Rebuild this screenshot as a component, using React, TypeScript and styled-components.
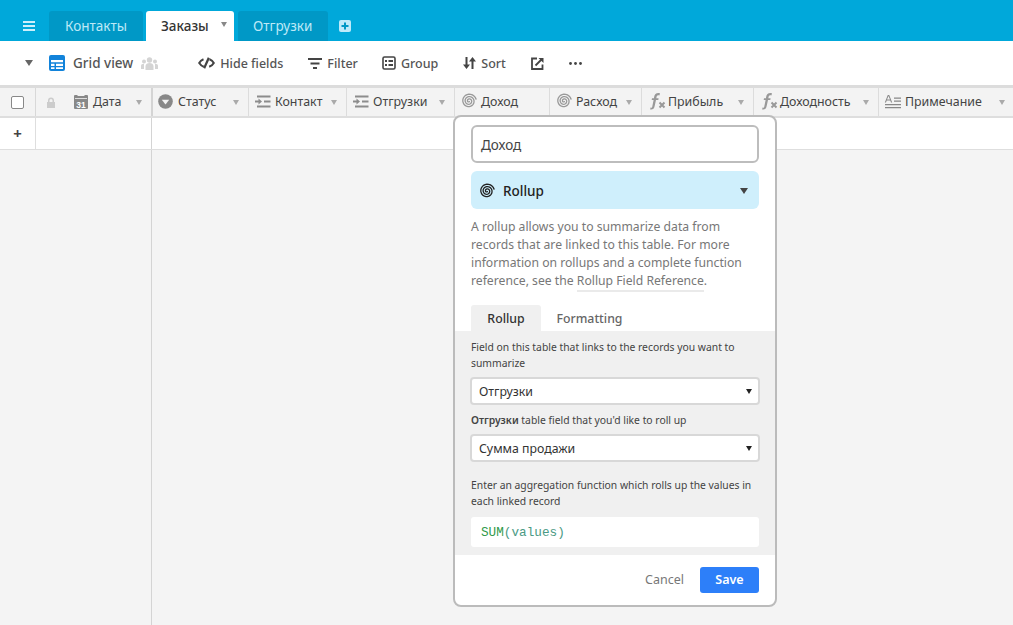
import { createGlobalStyle } from 'styled-components'
import styled from 'styled-components'

const GlobalStyle = createGlobalStyle`
  html, body {
    margin: 0;
    padding: 0;
    height: 100%;
    overflow: hidden;
    background: #f4f4f4;
    font-family: "Noto Sans", "Open Sans", sans-serif;
    color: #333;
  }
  * { box-sizing: border-box; }
`

const Page = styled.div`
  position: relative;
  width: 1013px;
  height: 625px;
  overflow: hidden;
  display: flex;
  flex-direction: column;
`

const TopBar = styled.div`
  height: 41px;
  background: #00a8da;
  display: flex;
  align-items: flex-end;
  padding-left: 23px;
`

const Burger = styled.div`
  width: 12px;
  height: 10px;
  margin: 0 14px 10px 0;
  color: #cdeffb;
  display: flex;
`

const Tab = styled.div<{ $active?: boolean; $w: number; $pad: number }>`
  width: ${(p) => p.$w}px;
  height: 30px;
  margin-right: ${(p) => (p.$active ? 4 : 3)}px;
  border-radius: 3px 3px 0 0;
  background: ${(p) => (p.$active ? '#fff' : '#0098c6')};
  color: ${(p) => (p.$active ? '#333' : '#bde9f7')};
  font-size: 13.5px;
  font-weight: ${(p) => (p.$active ? 500 : 400)};
  display: flex;
  align-items: center;
  padding-left: ${(p) => p.$pad}px;
  position: relative;
`

const TabCaret = styled.span`
  position: absolute;
  right: 7px;
  top: 11px;
  width: 0;
  height: 0;
  border-left: 3.5px solid transparent;
  border-right: 3.5px solid transparent;
  border-top: 5px solid #888;
`

const AddTab = styled.div`
  width: 12px;
  height: 12px;
  margin: 0 0 9px 8px;
  display: flex;
`

const Toolbar = styled.div`
  height: 44px;
  background: #fff;
  display: flex;
  align-items: center;
  color: #555;
  font-size: 12.5px;
  font-weight: 500;
`

const ViewCaret = styled.span`
  width: 0;
  height: 0;
  margin: 0 16px 0 25px;
  border-left: 4.5px solid transparent;
  border-right: 4.5px solid transparent;
  border-top: 6px solid #666;
`

const ViewName = styled.span`
  margin: 0 8px 0 8px;
  font-size: 13.5px;
  color: #555;
`

const ToolButton = styled.div<{ $left: number }>`
  display: flex;
  align-items: center;
  gap: 5px;
  margin-left: ${(p) => p.$left}px;
  white-space: nowrap;
`

const HeaderRow = styled.div`
  height: 33px;
  display: flex;
  background: #f3f3f3;
  border-top: 3px solid #dcdcdc;
  border-bottom: 2px solid #dedede;
`

const CheckCell = styled.div`
  width: 36px;
  flex: none;
  display: flex;
  align-items: center;
  justify-content: center;
  border-right: 1px solid #d8d8d8;
`

const CheckBox = styled.div`
  width: 13px;
  height: 13px;
  border: 1px solid #888;
  border-radius: 2px;
  background: #fff;
`

const LockCell = styled.div`
  width: 32px;
  flex: none;
  display: flex;
  align-items: center;
  padding-left: 10px;
`

const HeaderCell = styled.div<{ $w: number; $strong?: boolean; $gap: number; $pad: number }>`
  width: ${(p) => p.$w}px;
  flex: none;
  display: flex;
  align-items: center;
  position: relative;
  padding: 0 0 2px ${(p) => p.$pad}px;
  gap: ${(p) => p.$gap}px;
  font-size: 12.4px;
  color: #444;
  white-space: nowrap;
  border-right: ${(p) => (p.$strong ? '2px solid #d4d4d4' : '1px solid #dcdcdc')};
`

const CellCaret = styled.span`
  position: absolute;
  right: 9px;
  top: 12px;
  width: 0;
  height: 0;
  border-left: 3.5px solid transparent;
  border-right: 3.5px solid transparent;
  border-top: 5px solid #aaa;
`

const AddRow = styled.div`
  height: 32px;
  background: #fff;
  display: flex;
  border-bottom: 1px solid #dedede;
`

const PlusCell = styled.div`
  width: 36px;
  border-right: 1px solid #dedede;
  display: flex;
  align-items: center;
  justify-content: center;
  font-size: 15px;
  font-weight: 700;
  color: #444;
  padding-bottom: 2px;
`

const FrozenCell = styled.div`
  width: 116px;
  border-right: 1px solid #d4d4d4;
`

const Body = styled.div`
  flex: 1;
  display: flex;
  background: #f4f4f4;
`

const FrozenFill = styled.div`
  width: 152px;
  border-right: 1px solid #d4d4d4;
`

const Popup = styled.div`
  position: absolute;
  left: 453px;
  top: 115px;
  width: 324px;
  height: 492px;
  background: #fff;
  border: 2px solid #bbb;
  border-radius: 8px;
  overflow: hidden;
  display: flex;
  flex-direction: column;
`

const Upper = styled.div`
  padding: 8px 16px 0;
`

const NameInput = styled.div`
  height: 38px;
  border: 2px solid #bdbdbd;
  border-radius: 6px;
  display: flex;
  align-items: center;
  padding: 2px 0 0 8px;
  font-size: 13.5px;
  color: #444;
`

const TypeSelect = styled.div`
  height: 38px;
  margin-top: 8px;
  border-radius: 6px;
  background: #cfeffc;
  display: flex;
  align-items: center;
  padding: 1px 11px 0 8px;
  gap: 8px;
  font-size: 13.5px;
  font-weight: 500;
  color: #222;
`

const TypeCaret = styled.span`
  margin-left: auto;
  width: 0;
  height: 0;
  border-left: 4px solid transparent;
  border-right: 4px solid transparent;
  border-top: 6px solid #444;
`

const Description = styled.p`
  margin: 9px 0 0;
  font-size: 12.2px;
  line-height: 18px;
  color: #777;
`

const DocLink = styled.span`
  border-bottom: 2px solid #eaeaea;
  padding-bottom: 1px;
`

const Tabs = styled.div`
  display: flex;
  margin-top: 15px;
`

const SubTab = styled.div<{ $active?: boolean }>`
  height: 26px;
  width: ${(p) => (p.$active ? 70 : 97)}px;
  display: flex;
  align-items: center;
  justify-content: center;
  border-radius: 3px 3px 0 0;
  font-size: 12.3px;
  font-weight: 500;
  background: ${(p) => (p.$active ? '#f0f0f0' : 'transparent')};
  color: ${(p) => (p.$active ? '#333' : '#666')};
`

const Config = styled.div`
  background: #f0f0f0;
  padding: 8px 16px 0;
  height: 224px;
`

const Hint = styled.div<{ $top?: number }>`
  font-size: 10.35px;
  line-height: 16px;
  color: #444;
  margin-top: ${(p) => p.$top ?? 0}px;
`

const Strong = styled.b`
  font-weight: 600;
`

const DropDown = styled.div`
  height: 28px;
  margin: 6px -1px 0;
  background: #fff;
  border: 2px solid #d8d8d8;
  border-radius: 4px;
  display: flex;
  align-items: center;
  padding: 1px 6px 0 7px;
  font-size: 12.3px;
  color: #333;
`

const DropCaret = styled.span`
  margin-left: auto;
  width: 0;
  height: 0;
  border-left: 3.5px solid transparent;
  border-right: 3.5px solid transparent;
  border-top: 5px solid #222;
`

const Formula = styled.div`
  height: 30px;
  margin-top: 8px;
  background: #fff;
  border-radius: 3px;
  display: flex;
  align-items: center;
  padding-left: 10px;
  font-family: "Liberation Mono", monospace;
  font-size: 12.7px;
  color: #4a9a84;
`

const FormulaName = styled.span`
  color: #2f9a4a;
`

const Footer = styled.div`
  flex: 1;
  display: flex;
  align-items: center;
  justify-content: flex-end;
  padding: 0 16px 1px;
  gap: 16px;
`

const CancelButton = styled.span`
  font-size: 12.5px;
  color: #777;
`

const SaveButton = styled.div`
  width: 59px;
  height: 26px;
  background: #2d7ff9;
  border-radius: 3px;
  color: #fff;
  font-size: 12.5px;
  font-weight: 600;
  display: flex;
  align-items: center;
  justify-content: center;
`

// archimedean spiral, about 2.75 turns from the centre out to the edge
const spiralPath = Array.from({ length: 67 }, (_, i) => {
  const t = (i / 66) * Math.PI * 5.6
  const r = 0.7 + (i / 66) * 6.6
  return `${i === 0 ? 'M' : 'L'}${(8 + r * Math.cos(t + 1)).toFixed(2)} ${(8 + r * Math.sin(t + 1)).toFixed(2)}`
}).join('')

const Spiral = ({ color }: { color: string }) => (
  <svg width="16" height="16" viewBox="0 0 16 16" fill="none" stroke={color} strokeWidth="1.3">
    <path d={spiralPath} strokeLinecap="round" />
  </svg>
)

const Fx = () => (
  <svg width="18" height="17" viewBox="0 0 18 17" fill="#999">
    <path d="M10.500 0C7.800 0 6.600 1.600 6.100 4L5.900 5.200H4L3.700 7h1.900L4.300 13.400c-.2 1-.6 1.400-1.700 1.200l-.5 1.900c2.600.5 4-.6 4.500-3.200L8 7h2.300l.3-1.800H8.300L8.500 4.200c.2-1.300.8-2.100 2-1.900.4 0 .7.100 1 .3l.4-2.300C11.500.1 11 0 10.500 0z" />
    <path d="M11.500 9.500l5 5M16.500 9.500l-5 5" stroke="#999" strokeWidth="2" />
  </svg>
)

const LinkedIcon = () => (
  <svg width="16" height="13" viewBox="0 0 16 13" fill="none" stroke="#8c8c8c" strokeWidth="2">
    <path d="M2 1.500h13.500M9 6.500h6.500M2 11.500h13.500" />
    <path d="M0 6.500h4" />
    <path d="M3.500 3.500l3.500 3-3.500 3z" fill="#8c8c8c" stroke="none" />
  </svg>
)

const CalendarIcon = () => (
  <svg width="14" height="15" viewBox="0 0 14 15">
    <path d="M1 1h2.500v1h7V1H13a1 1 0 0 1 1 1v12a1 1 0 0 1-1 1H1a1 1 0 0 1-1-1V2a1 1 0 0 1 1-1z" fill="#888" />
    <rect x="1" y="4" width="12" height="1" fill="#ddd" />
    <text x="7" y="13.500" textAnchor="middle" fontSize="8.500" fontWeight="700" fill="#fff" fontFamily="Liberation Sans">31</text>
  </svg>
)

const StatusIcon = () => (
  <svg width="15" height="15" viewBox="0 0 15 15">
    <circle cx="7.500" cy="7.500" r="7.300" fill="#888" />
    <path d="M3.800 5.800h7.400L7.500 10.500z" fill="#f3f3f3" />
  </svg>
)

const TextIcon = () => (
  <svg width="18" height="15" viewBox="0 0 18 15" fill="#888">
    <path d="M3.800 1h1.400l3 7.500H7L6.300 6.500H2.700L2 8.500H.8zM3 5.500h3L4.500 2z" />
    <path d="M10 3.500h7v1.200h-7zM10 6.500h7v1.200h-7zM1 10h16v1.200H1zM1 13h16v1.200H1z" />
  </svg>
)

const columns = [
  { label: 'Статус', w: 96, icon: <StatusIcon />, caret: true, gap: 5, pad: 5 },
  { label: 'Контакт', w: 98, icon: <LinkedIcon />, caret: true, gap: 4, pad: 6 },
  { label: 'Отгрузки', w: 108, icon: <LinkedIcon />, caret: true, gap: 4, pad: 6 },
  { label: 'Доход', w: 95, icon: <Spiral color="#999" />, caret: false, gap: 4, pad: 6 },
  { label: 'Расход', w: 92, icon: <Spiral color="#999" />, caret: true, gap: 4, pad: 6 },
  { label: 'Прибыль', w: 112, icon: <Fx />, caret: true, gap: 2, pad: 6 },
  { label: 'Доходность', w: 125, icon: <Fx />, caret: true, gap: 2, pad: 6 },
  { label: 'Примечание', w: 136, icon: <TextIcon />, caret: true, gap: 3, pad: 5 },
]

export default function App () {
  return (
    <Page>
      <GlobalStyle />
      <TopBar>
        <Burger>
          <svg width="12" height="10" viewBox="0 0 12 10" fill="currentColor">
            <rect width="12" height="2" />
            <rect y="4" width="12" height="2" />
            <rect y="8" width="12" height="2" />
          </svg>
        </Burger>
        <Tab $w={94} $pad={16}>Контакты</Tab>
        <Tab $w={88} $pad={15} $active>Заказы<TabCaret /></Tab>
        <Tab $w={90} $pad={15}>Отгрузки</Tab>
        <AddTab>
          <svg width="12" height="12" viewBox="0 0 12 12">
            <rect width="12" height="12" rx="2" fill="#bfeafa" />
            <path d="M6 2.500v7M2.500 6h7" stroke="#0098c6" strokeWidth="2" />
          </svg>
        </AddTab>
      </TopBar>
      <Toolbar>
        <ViewCaret />
        <svg width="16" height="16" viewBox="0 0 16 16">
          <rect width="16" height="16" rx="2" fill="#1283da" />
          <path d="M2 5h12v2.300H2zM2 8.700h3.500V11H2zM7 8.700h7V11H7zM2 12.200h3.500V14H2zM7 12.200h7V14H7z" fill="#fff" />
        </svg>
        <ViewName>Grid view</ViewName>
        <svg width="17" height="13" viewBox="0 0 17 13" fill="#d4d4d4">
          <circle cx="8.500" cy="3" r="2.700" />
          <circle cx="3" cy="4.500" r="2" />
          <circle cx="14" cy="4.500" r="2" />
          <path d="M4.500 13V9c0-2 2-3 4-3s4 1 4 3v4zM0 12V9c0-1.500 1-2.300 3-2.300V12zM17 12V9c0-1.500-1-2.300-3-2.300V12z" />
        </svg>
        <ToolButton $left={40}>
          <svg width="17" height="12" viewBox="0 0 17 12" fill="none" stroke="#444" strokeWidth="2">
            <path d="M5.500 2.200C3.500 3 2 4.500 1.200 6 2.200 7.600 3.800 9 5.800 9.800M11.500 2.200c2 .8 3.500 2.300 4.300 3.800-.9 1.600-2.500 3-4.600 3.800" />
            <path d="M10.800 .8 6.200 11.200" strokeWidth="2.200" />
          </svg>
          Hide fields
        </ToolButton>
        <ToolButton $left={25}>
          <svg width="14" height="11" viewBox="0 0 14 11" fill="#444">
            <rect width="14" height="2" />
            <rect x="2.500" y="4.500" width="9" height="2" />
            <rect x="5" y="9" width="4" height="2" />
          </svg>
          Filter
        </ToolButton>
        <ToolButton $left={24}>
          <svg width="14" height="14" viewBox="0 0 14 14" fill="none" stroke="#444" strokeWidth="1.600">
            <rect x="1" y="1" width="12" height="12" rx="1.500" />
            <path d="M3 5h2M6.500 5H11M3 9h2M6.500 9H11" strokeWidth="1.800" />
          </svg>
          Group
        </ToolButton>
        <ToolButton $left={25}>
          <svg width="13" height="12" viewBox="0 0 13 12" fill="#444">
            <path d="M2.500 0h2v7.500H7L3.500 12 0 7.500h2.500zM8.500 12h2V4.500H13L9.500 0 6 4.500h2.500z" />
          </svg>
          Sort
        </ToolButton>
        <ToolButton $left={25}>
          <svg width="13" height="13" viewBox="0 0 13 13" fill="none" stroke="#444" strokeWidth="1.800">
            <path d="M6 1.500H1v10.500h10.500V7.500" />
            <path d="M4.500 8.500 11 2" />
            <path d="M7.500 1h5v5z" fill="#444" stroke="none" />
          </svg>
        </ToolButton>
        <ToolButton $left={25}>
          <svg width="13" height="3" viewBox="0 0 13 3" fill="#444">
            <circle cx="1.500" cy="1.500" r="1.400" />
            <circle cx="6.500" cy="1.500" r="1.400" />
            <circle cx="11.500" cy="1.500" r="1.400" />
          </svg>
        </ToolButton>
      </Toolbar>
      <HeaderRow>
        <CheckCell><CheckBox /></CheckCell>
        <LockCell>
          <svg width="10" height="11" viewBox="0 0 10 11" fill="#ccc">
            <path d="M2 5V3.500a3 3 0 0 1 6 0V5h1v6H1V5zM3.500 5h3V3.500a1.500 1.500 0 0 0-3 0z" />
          </svg>
        </LockCell>
        <HeaderCell $w={85} $strong $gap={5} $pad={6}>
          <CalendarIcon />
          Дата
          <CellCaret />
        </HeaderCell>
        {columns.map((column) => (
          <HeaderCell key={column.label} $w={column.w} $gap={column.gap} $pad={column.pad}>
            {column.icon}
            {column.label}
            {column.caret && <CellCaret />}
          </HeaderCell>
        ))}
      </HeaderRow>
      <AddRow>
        <PlusCell>+</PlusCell>
        <FrozenCell />
      </AddRow>
      <Body>
        <FrozenFill />
      </Body>
      <Popup>
        <Upper>
          <NameInput>Доход</NameInput>
          <TypeSelect>
            <Spiral color="#222" />
            Rollup
            <TypeCaret />
          </TypeSelect>
          <Description>
            A rollup allows you to summarize data from records that are linked to this table. For more information on rollups and a complete function reference, see the <DocLink>Rollup Field Reference</DocLink>.
          </Description>
          <Tabs>
            <SubTab $active>Rollup</SubTab>
            <SubTab>Formatting</SubTab>
          </Tabs>
        </Upper>
        <Config>
          <Hint>Field on this table that links to the records you want to summarize</Hint>
          <DropDown>Отгрузки<DropCaret /></DropDown>
          <Hint $top={7}><Strong>Отгрузки</Strong> table field that you'd like to roll up</Hint>
          <DropDown>Сумма продажи<DropCaret /></DropDown>
          <Hint $top={15}>Enter an aggregation function which rolls up the values in each linked record</Hint>
          <Formula><FormulaName>SUM</FormulaName>(values)</Formula>
        </Config>
        <Footer>
          <CancelButton>Cancel</CancelButton>
          <SaveButton>Save</SaveButton>
        </Footer>
      </Popup>
    </Page>
  )
}
